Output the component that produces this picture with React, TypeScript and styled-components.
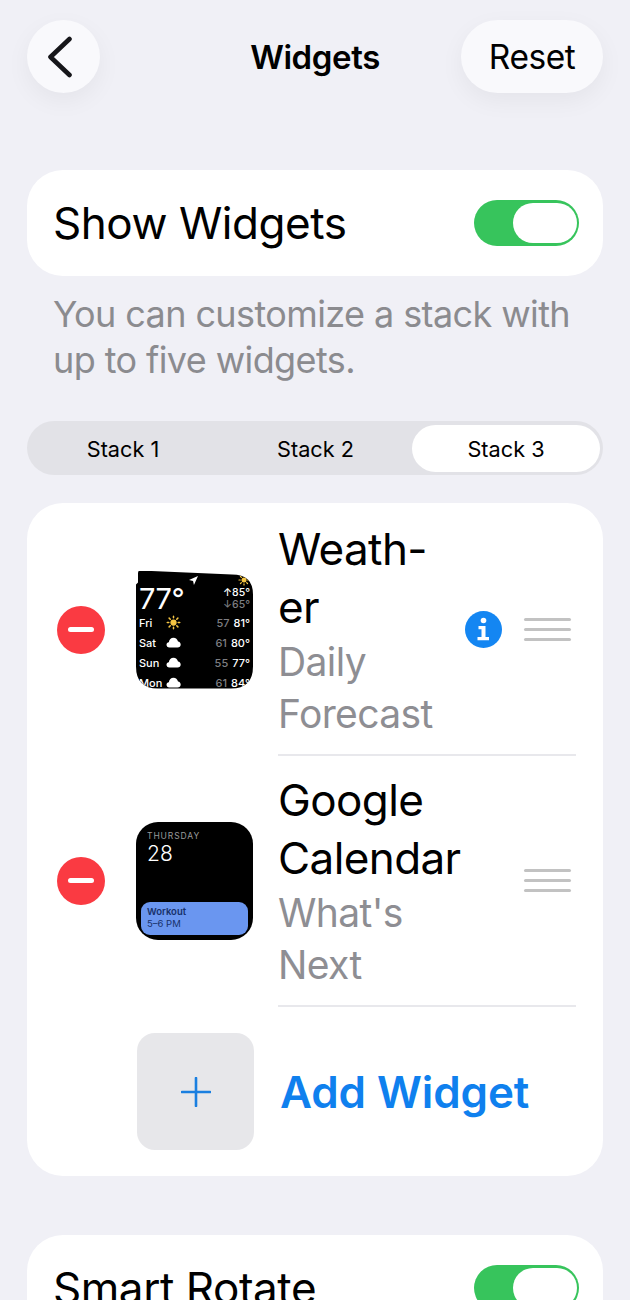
import React from 'react'
import styled, { createGlobalStyle } from 'styled-components'

const GlobalStyle = createGlobalStyle`
  html, body {
    margin: 0;
    height: 1300px;
    overflow: hidden;
    background: #f0f0f6;
    font-family: Inter, 'Liberation Sans', sans-serif;
    color: #000;
  }
`

const Page = styled.div`
  width: 630px;
  box-sizing: border-box;
  padding: 20px 27px 0;
`

const Header = styled.div`
  display: grid;
  grid-template-columns: 1fr auto 1fr;
  align-items: center;
  height: 73px;
`

const RoundButton = styled.div`
  height: 73px;
  box-sizing: border-box;
  border-radius: 37px;
  background: #f9f9fc;
  box-shadow: 0 8px 24px rgba(0, 0, 0, 0.05);
  display: flex;
  align-items: center;
  justify-content: center;
`

const BackButton = styled(RoundButton)`
  width: 73px;
  padding-right: 7px;
`

const ResetButton = styled(RoundButton)`
  width: 142px;
  justify-self: end;
  font-size: 33.5px;
  letter-spacing: -0.5px;
`

const Title = styled.div`
  font-size: 33px;
  font-weight: 600;
  letter-spacing: -0.4px;
`

const ToggleCard = styled.div<{ $top: number }>`
  margin-top: ${(p) => p.$top}px;
  background: #fff;
  border-radius: 36px;
  height: 106px;
  box-sizing: border-box;
  padding: 0 24px 0 26px;
  display: flex;
  align-items: center;
  justify-content: space-between;
`

const ToggleLabel = styled.div`
  font-size: 44px;
  font-weight: 400;
  letter-spacing: -0.45px;
`

const Toggle = styled.div`
  width: 105px;
  height: 46px;
  box-sizing: border-box;
  padding: 3px 2px;
  border-radius: 23px;
  background: #37c45c;
  display: flex;
  justify-content: flex-end;
`

const Knob = styled.div`
  width: 64px;
  height: 40px;
  border-radius: 20px;
  background: #fff;
`

const Hint = styled.div`
  margin: 15px 27px 0 26px;
  font-size: 36px;
  line-height: 46px;
  color: #8b8b8f;
  letter-spacing: -0.6px;
`

const Segments = styled.div`
  margin-top: 38px;
  height: 54px;
  box-sizing: border-box;
  padding: 4px 3px 3px 0;
  border-radius: 27px;
  background: #e2e2e7;
  display: grid;
  grid-template-columns: 192px 193px 1fr;
`

const Segment = styled.div<{ $active?: boolean }>`
  display: flex;
  align-items: center;
  justify-content: center;
  border-radius: 24px;
  font-size: 21.7px;
  background: ${(p) => (p.$active ? '#fff' : 'transparent')};
`

const ListCard = styled.div`
  margin-top: 28px;
  padding-top: 2px;
  background: #fff;
  border-radius: 36px;
`

const Row = styled.div`
  display: flex;
  align-items: center;
  padding-left: 30px;
`

const Lead = styled.div`
  display: flex;
  align-items: center;
  flex: none;
  margin-bottom: 2px;
`

const Minus = styled.div`
  width: 48px;
  height: 48px;
  flex: none;
  border-radius: 50%;
  background: #fa3a42;
  display: flex;
  align-items: center;
  justify-content: center;
  margin-right: 31px;

  &::after {
    content: '';
    width: 26px;
    height: 5px;
    border-radius: 3px;
    background: #fff;
  }
`

const Tile = styled.div`
  width: 117px;
  height: 118px;
  flex: none;
  box-sizing: border-box;
  border-radius: 22px;
  background: #000;
  color: #fff;
  overflow: hidden;
`

/* the top edge of this picture is uneven in the screenshot */
const WeatherCard = styled(Tile)`
  border-radius: 0;
  clip-path: path('M4 0 L96 4 Q117 4 117 24 L117 96 Q117 118 95 118 L22 118 Q0 118 0 96 L0 14 L2 12 L2 3 Q2 0 4 0 Z');
`

const RowBody = styled.div`
  flex: 1;
  min-width: 0;
  margin: 0 27px 0 25px;
  height: 251px;
  box-sizing: border-box;
  border-bottom: 2px solid #e8e8ec;
  display: flex;
  align-items: center;
  justify-content: space-between;
`

const Name = styled.div`
  font-size: 44px;
  line-height: 58px;
  letter-spacing: -0.6px;
`

const Sub = styled.div`
  font-size: 39px;
  line-height: 52px;
  letter-spacing: -0.6px;
  color: #8e8e93;
`

const RowActions = styled.div`
  display: flex;
  align-items: center;
  gap: 22px;
  margin-right: 5px;
`

const Handle = styled.div`
  width: 47px;
  display: flex;
  flex-direction: column;
  gap: 7px;

  span {
    height: 3px;
    border-radius: 2px;
    background: #c2c2c2;
  }
`

const AddRow = styled.div`
  display: flex;
  align-items: center;
  padding: 26px 0 26px 110px;
`

const AddTile = styled.div`
  width: 117px;
  height: 117px;
  border-radius: 18px;
  background: #e7e7ea;
  display: flex;
  align-items: center;
  justify-content: center;
`

const AddLabel = styled.div`
  margin-left: 26px;
  font-size: 44px;
  font-weight: 600;
  letter-spacing: -0.1px;
  color: #0f80ee;
`

/* weather tile */
const Weather = styled.div`
  padding: 6px 3px 0 3px;
  font-size: 11px;
  font-weight: 500;
`

const WeatherTop = styled.div`
  display: flex;
  justify-content: flex-end;
  align-items: center;
  gap: 40px;
  height: 7px;
`

const WeatherHead = styled.div`
  display: flex;
  justify-content: space-between;
  align-items: center;
  height: 28px;
  margin-top: 1px;
`

const Temp = styled.div`
  font-size: 29px;
  font-weight: 400;
  line-height: 28px;
  letter-spacing: -0.5px;
`

const HighLow = styled.div`
  text-align: right;
  font-size: 10.5px;
  line-height: 12px;
`

const Low = styled.div`
  color: #7e7e82;
`

const Day = styled.div`
  display: grid;
  grid-template-columns: 27px 18px 1fr auto;
  align-items: center;
  height: 20px;
`

const DayLow = styled.div`
  text-align: right;
  color: #7e7e82;
  padding-right: 4px;
`

/* calendar tile */
const Calendar = styled(Tile)`
  padding: 8px 5px 5px;
  display: flex;
  flex-direction: column;
`

const CalDay = styled.div`
  padding-left: 6px;
  font-size: 8.5px;
  letter-spacing: 0.9px;
  color: #9a9a9a;
  margin-top: 1px;
`

const CalDate = styled.div`
  padding-left: 6px;
  font-size: 21px;
  font-weight: 300;
  line-height: 26px;
`

const CalEvent = styled.div`
  margin-top: auto;
  height: 33px;
  box-sizing: border-box;
  padding: 4px 6px;
  border-radius: 9px;
  background: #6a96f0;
  color: #17306a;
  font-size: 9.5px;
  line-height: 12px;
`

const EventName = styled.div`
  font-weight: 600;
`

const Sun = ({ size }: { size: number }) => (
  <svg width={size} height={size} viewBox="0 0 24 24" stroke="#f5c542" strokeWidth="2.4" strokeLinecap="round">
    <circle cx="12" cy="12" r="5" fill="#f5c542" stroke="none" />
    <path d="M12 2v2.500M12 19.500V22M2 12h2.500M19.500 12H22M5 5l1.800 1.800M17.200 17.200 19 19M5 19l1.800-1.800M17.200 6.800 19 5" />
  </svg>
)

const CloudIcon = () => (
  <svg width="15" height="11" viewBox="0 0 15 11" fill="#fff">
    <path d="M3.500 10.500C1.500 10.500.500 9.200.500 7.800c0-1.300 1-2.400 2.300-2.500C3.100 2.700 5 .7 7.500.7c2.200 0 4 1.500 4.500 3.700 1.600.2 2.700 1.500 2.700 3 0 1.700-1.300 3.100-3.200 3.100z" />
  </svg>
)

const days = [
  { name: 'Fri', low: '57', high: '81°', sun: true },
  { name: 'Sat', low: '61', high: '80°' },
  { name: 'Sun', low: '55', high: '77°' },
  { name: 'Mon', low: '61', high: '84°' },
]

const WeatherTile = () => (
  <WeatherCard>
    <Weather>
      <WeatherTop>
        <svg width="9" height="9" viewBox="0 0 10 10" fill="#fff">
          <path d="M10 0 0 4.500l4.500 1 1 4.500z" />
        </svg>
        <Sun size={12} />
      </WeatherTop>
      <WeatherHead>
        <Temp>77°</Temp>
        <HighLow>
          <div>↑85°</div>
          <Low>↓65°</Low>
        </HighLow>
      </WeatherHead>
      {days.map((d) => (
        <Day key={d.name}>
          <div>{d.name}</div>
          {d.sun ? <Sun size={15} /> : <CloudIcon />}
          <DayLow>{d.low}</DayLow>
          <div>{d.high}</div>
        </Day>
      ))}
    </Weather>
  </WeatherCard>
)

const App = () => (
  <Page>
    <GlobalStyle />
    <Header>
      <BackButton>
        <svg width="26" height="42" viewBox="0 0 26 42" fill="none" stroke="#16161a" strokeWidth="4.600" strokeLinecap="round" strokeLinejoin="round">
          <path d="M22.500 3 3.500 21l19 18" />
        </svg>
      </BackButton>
      <Title>Widgets</Title>
      <ResetButton>Reset</ResetButton>
    </Header>

    <ToggleCard $top={77}>
      <ToggleLabel>Show Widgets</ToggleLabel>
      <Toggle>
        <Knob />
      </Toggle>
    </ToggleCard>

    <Hint>
      You can customize a stack with
      <br />
      up to five widgets.
    </Hint>

    <Segments>
      <Segment>Stack 1</Segment>
      <Segment>Stack 2</Segment>
      <Segment $active>Stack 3</Segment>
    </Segments>

    <ListCard>
      <Row>
        <Lead>
          <Minus />
          <WeatherTile />
        </Lead>
        <RowBody>
          <div>
            <Name>Weath-</Name>
            <Name>er</Name>
            <Sub>Daily</Sub>
            <Sub>Forecast</Sub>
          </div>
          <RowActions>
            <svg width="37" height="37" viewBox="0 0 37 37">
              <circle cx="18.500" cy="18.500" r="18.500" fill="#1486f2" />
              <circle cx="18.500" cy="9.500" r="2.800" fill="#fff" />
              <path d="M13.500 15h7v11h3.500v3.200H12.500V26H16.500v-7.800h-3z" fill="#fff" />
            </svg>
            <Handle>
              <span />
              <span />
              <span />
            </Handle>
          </RowActions>
        </RowBody>
      </Row>
      <Row>
        <Lead>
          <Minus />
          <Calendar>
            <CalDay>THURSDAY</CalDay>
            <CalDate>28</CalDate>
            <CalEvent>
              <EventName>Workout</EventName>
              <div>5–6 PM</div>
            </CalEvent>
          </Calendar>
        </Lead>
        <RowBody>
          <div>
            <Name>Google</Name>
            <Name>Calendar</Name>
            <Sub>What's</Sub>
            <Sub>Next</Sub>
          </div>
          <RowActions>
            <Handle>
              <span />
              <span />
              <span />
            </Handle>
          </RowActions>
        </RowBody>
      </Row>
      <AddRow>
        <AddTile>
          <svg width="30" height="30" viewBox="0 0 30 30" stroke="#1a7fe0" strokeWidth="2.600" strokeLinecap="round">
            <path d="M15 1v28M1 15h28" />
          </svg>
        </AddTile>
        <AddLabel>Add Widget</AddLabel>
      </AddRow>
    </ListCard>

    <ToggleCard $top={59}>
      <ToggleLabel>Smart Rotate</ToggleLabel>
      <Toggle>
        <Knob />
      </Toggle>
    </ToggleCard>
  </Page>
)

export default App
